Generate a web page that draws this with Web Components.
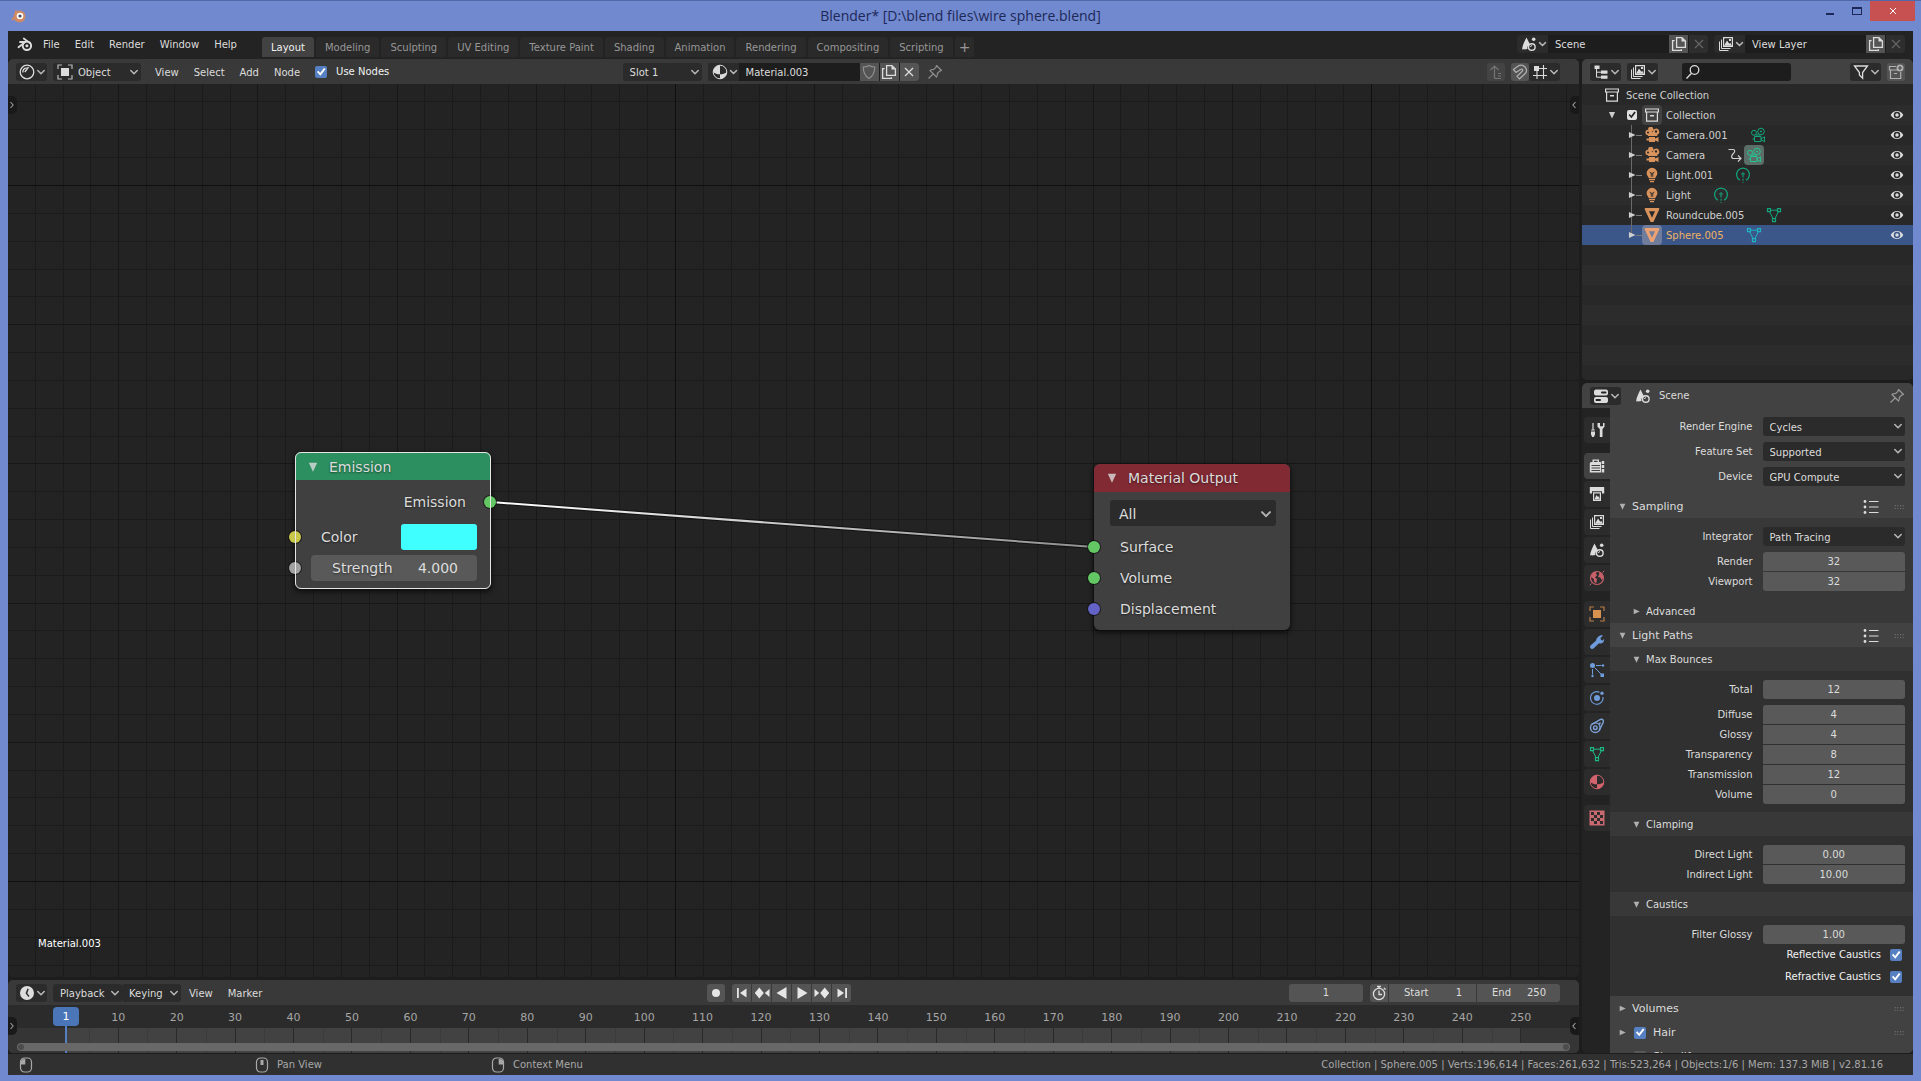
<!DOCTYPE html>
<html lang="en">
<head>
<meta charset="utf-8">
<title>Blender* [D:\blend files\wire sphere.blend]</title>
<style>
	html, body {
		height: 100%;
		margin: 0;
	}
	body {
		display: flex;
		flex-direction: column;
		overflow: hidden;
		background: #7189cf;
		color: #dcdcdc;
		font: 10px/18px "DejaVu Sans", sans-serif;
	}
</style>
</head>
<body>

<bl-titlebar>Blender* [D:\blend files\wire sphere.blend]</bl-titlebar>

<bl-app>
	<bl-topbar slot="top">
		<bl-menu>File</bl-menu>
		<bl-menu>Edit</bl-menu>
		<bl-menu>Render</bl-menu>
		<bl-menu>Window</bl-menu>
		<bl-menu>Help</bl-menu>

		<bl-tab slot="tabs" active>Layout</bl-tab>
		<bl-tab slot="tabs">Modeling</bl-tab>
		<bl-tab slot="tabs">Sculpting</bl-tab>
		<bl-tab slot="tabs">UV Editing</bl-tab>
		<bl-tab slot="tabs">Texture Paint</bl-tab>
		<bl-tab slot="tabs">Shading</bl-tab>
		<bl-tab slot="tabs">Animation</bl-tab>
		<bl-tab slot="tabs">Rendering</bl-tab>
		<bl-tab slot="tabs">Compositing</bl-tab>
		<bl-tab slot="tabs">Scripting</bl-tab>
		<bl-tab slot="tabs" add></bl-tab>

		<bl-datablock slot="blocks" icon="scene" value="Scene" label="Scene" locked></bl-datablock>
		<bl-datablock slot="blocks" icon="layers" value="View Layer" label="View layer" locked></bl-datablock>
	</bl-topbar>

	<bl-editor slot="nodes">
		<bl-header slot="header">
			<bl-picker icon="sphere" label="Editor type"></bl-picker>
			<bl-gap size="s"></bl-gap>
			<bl-select icon="object" value="Object" label="Shader type" style="--width: 88px"></bl-select>
			<bl-gap size="s"></bl-gap>
			<bl-menu>View</bl-menu>
			<bl-menu>Select</bl-menu>
			<bl-menu>Add</bl-menu>
			<bl-menu>Node</bl-menu>
			<bl-gap size="m"></bl-gap>
			<bl-check label="Use Nodes"></bl-check>
			<bl-gap style="flex: 3"></bl-gap>
			<bl-select value="Slot 1" label="Slot" style="--width: 79px"></bl-select>
			<bl-gap size="s"></bl-gap>
			<bl-datablock icon="material" value="Material.003" label="Material" shield></bl-datablock>
			<bl-gap size="m"></bl-gap>
			<bl-icon name="pin" style="color: #8e8e8e"></bl-icon>
			<bl-gap style="flex: 7"></bl-gap>
			<bl-tool icon="up" label="Parent node tree" dim></bl-tool>
			<bl-gap size="s"></bl-gap>
			<bl-tool icon="magnet" label="Snap"></bl-tool>
			<bl-picker icon="snap" label="Snap element"></bl-picker>
			<bl-gap size="l"></bl-gap>
		</bl-header>
		<bl-canvas></bl-canvas>
	</bl-editor>

	<bl-editor slot="timeline">
		<bl-header slot="header">
			<bl-picker icon="clock" label="Editor type"></bl-picker>
			<bl-gap size="s"></bl-gap>
			<bl-select value="Playback" label="Playback" style="--width: 69px"></bl-select>
			<bl-select value="Keying" label="Keying" style="--width: 59px"></bl-select>
			<bl-menu>View</bl-menu>
			<bl-menu>Marker</bl-menu>
			<bl-gap style="flex: 1"></bl-gap>
			<bl-transport></bl-transport>
			<bl-gap style="flex: 1"></bl-gap>
			<bl-range></bl-range>
			<bl-gap size="l"></bl-gap>
		</bl-header>
		<bl-timeline></bl-timeline>
	</bl-editor>

	<bl-editor slot="outliner" light>
		<bl-header slot="header">
			<bl-picker icon="tree" label="Editor type"></bl-picker>
			<bl-gap size="s"></bl-gap>
			<bl-picker icon="layers" label="Display mode"></bl-picker>
			<bl-gap style="flex: 2"></bl-gap>
			<bl-search></bl-search>
			<bl-gap style="flex: 5"></bl-gap>
			<bl-picker icon="filter" label="Filter"></bl-picker>
			<bl-gap size="s"></bl-gap>
			<bl-tool icon="newcollection" label="New collection"></bl-tool>
			<bl-gap size="m"></bl-gap>
		</bl-header>
		<bl-tree>
			<bl-item kind="root" icon="collection">Scene Collection</bl-item>
			<bl-item kind="group" icon="collection">Collection</bl-item>
			<bl-item icon="camera" data="cameradata">Camera.001</bl-item>
			<bl-item icon="camera" data="cameradata" linked>Camera</bl-item>
			<bl-item icon="light" data="lightdata">Light.001</bl-item>
			<bl-item icon="light" data="lightdata">Light</bl-item>
			<bl-item icon="mesh" data="meshdata">Roundcube.005</bl-item>
			<bl-item icon="mesh" data="meshdata" selected>Sphere.005</bl-item>
		</bl-tree>
	</bl-editor>

	<bl-editor slot="properties" light>
		<bl-header slot="header">
			<bl-picker icon="props" label="Editor type"></bl-picker>
			<bl-gap size="s"></bl-gap>
			<bl-gap size="m"></bl-gap>
			<bl-icon name="scene"></bl-icon>
			<bl-gap size="m"></bl-gap>
			<span>Scene</span>
			<bl-gap style="flex: 1"></bl-gap>
			<bl-icon name="pin" style="color: #9a9a9a"></bl-icon>
			<bl-gap size="m"></bl-gap>
		</bl-header>
		<bl-properties>
			<bl-proptab slot="tabs" icon="tool" label="Active tool" last></bl-proptab>
			<bl-proptab slot="tabs" icon="render" label="Render" active></bl-proptab>
			<bl-proptab slot="tabs" icon="output" label="Output"></bl-proptab>
			<bl-proptab slot="tabs" icon="layers" label="View layer"></bl-proptab>
			<bl-proptab slot="tabs" icon="scene" label="Scene"></bl-proptab>
			<bl-proptab slot="tabs" icon="world" label="World" style="color: #c8606a" last></bl-proptab>
			<bl-proptab slot="tabs" icon="object" label="Object" style="color: #d99150"></bl-proptab>
			<bl-proptab slot="tabs" icon="wrench" label="Modifiers" style="color: #6f9cdb"></bl-proptab>
			<bl-proptab slot="tabs" icon="particles" label="Particles" style="color: #6f9cdb"></bl-proptab>
			<bl-proptab slot="tabs" icon="physics" label="Physics" style="color: #6f9cdb"></bl-proptab>
			<bl-proptab slot="tabs" icon="constraint" label="Constraints" style="color: #7ea0d8"></bl-proptab>
			<bl-proptab slot="tabs" icon="meshdata" label="Object data" style="color: #1fb884"></bl-proptab>
			<bl-proptab slot="tabs" icon="material" label="Material" style="color: #d3636c" last></bl-proptab>
			<bl-proptab slot="tabs" icon="texture" label="Texture" style="color: #c8696f"></bl-proptab>

			<bl-fields>
				<bl-field kind="select" label="Render Engine" value="Cycles"></bl-field>
				<bl-field kind="select" label="Feature Set" value="Supported"></bl-field>
				<bl-field kind="select" label="Device" value="GPU Compute"></bl-field>
			</bl-fields>
			<bl-panel label="Sampling" open presets grip>
				<bl-fields>
					<bl-field kind="select" label="Integrator" value="Path Tracing"></bl-field>
					<bl-stack>
						<bl-field label="Render" value="32" edge="top"></bl-field>
						<bl-field label="Viewport" value="32" edge="bottom"></bl-field>
					</bl-stack>
				</bl-fields>
				<bl-panel label="Advanced" level="2"></bl-panel>
			</bl-panel>
			<bl-panel label="Light Paths" open presets grip>
				<bl-panel label="Max Bounces" level="2" open>
					<bl-fields>
						<bl-field label="Total" value="12"></bl-field>
						<bl-stack>
							<bl-field label="Diffuse" value="4" edge="top"></bl-field>
							<bl-field label="Glossy" value="4" edge="none"></bl-field>
							<bl-field label="Transparency" value="8" edge="none"></bl-field>
							<bl-field label="Transmission" value="12" edge="none"></bl-field>
							<bl-field label="Volume" value="0" edge="bottom"></bl-field>
						</bl-stack>
					</bl-fields>
				</bl-panel>
				<bl-panel label="Clamping" level="2" open>
					<bl-fields>
						<bl-stack>
							<bl-field label="Direct Light" value="0.00" edge="top"></bl-field>
							<bl-field label="Indirect Light" value="10.00" edge="bottom"></bl-field>
						</bl-stack>
					</bl-fields>
				</bl-panel>
				<bl-panel label="Caustics" level="2" open>
					<bl-fields tight>
						<bl-field label="Filter Glossy" value="1.00"></bl-field>
						<bl-check label="Reflective Caustics" trailing></bl-check>
						<bl-check label="Refractive Caustics" trailing></bl-check>
					</bl-fields>
				</bl-panel>
			</bl-panel>
			<bl-panel label="Volumes" grip></bl-panel>
			<bl-panel label="Hair" grip check="on"></bl-panel>
			<bl-panel label="Simplify" grip check="off"></bl-panel>
		</bl-properties>
	</bl-editor>

	<bl-status slot="status"></bl-status>
</bl-app>

<script>
'use strict';

/*
 * Icons, all on a 16 by 16 grid
 */

const stroke = 'fill="none" stroke="currentColor"';

const icons = {
	logo: `<path ${stroke} stroke-width="1.8" stroke-linecap="round" d="M1.5 11.3 8.3 6H3M6.8 2.5l6.4 4.9"/><circle ${stroke} stroke-width="2" cx="9.9" cy="9.8" r="4.2"/><circle fill="currentColor" cx="9.9" cy="9.8" r="1.5"/>`,
	chevron: `<path ${stroke} stroke-width="1.6" stroke-linecap="round" d="M4.8 6.5 8 9.7l3.2-3.2"/>`,
	left: `<path ${stroke} stroke-width="1.4" d="M10 4 6.5 8l3.5 4"/>`,
	right: `<path ${stroke} stroke-width="1.4" d="M6 4l3.5 4L6 12"/>`,
	down: '<path fill="currentColor" d="M4.5 4.5h7L8 12z"/>',
	side: '<path fill="currentColor" d="M4.5 4.5v7L12 8z"/>',
	sphere: `<circle ${stroke} stroke-width="1.3" cx="8" cy="8" r="6.8"/><path ${stroke} stroke-width="1.3" d="M3.8 8.5c0-2.700 1.500-4.500 3.900-4.700"/><path ${stroke} stroke-width="1.300" d="M5.800 8 9.500 3"/>`,
	object: `<path ${stroke} stroke-width="1.2" opacity=".8" d="M1 5V1h4M11 1h4v4M15 11v4h-4M5 15H1v-4"/><path fill="currentColor" d="M4 4h8v8H4z"/>`,
	material: `<circle ${stroke} cx="8" cy="8" r="6.8"/><path fill="currentColor" d="M8 1.2A6.8 6.8 0 0 0 1.2 8c1.500 1.500 4 2.300 6.800 2.300zM8 10.300c2.800 0 5.200-.8 6.800-2.300A6.800 6.800 0 0 1 8 14.800z"/>`,
	shield: `<path ${stroke} stroke-width="1.2" d="M8 1.500c1.500 1 3.600 1.500 5.700 1.500 0 5.500-1.500 9-5.700 11.500C3.800 12 2.300 8.500 2.300 3 4.400 3 6.500 2.500 8 1.500z"/>`,
	copy: `<path ${stroke} stroke-width="1.3" d="M5.600 1.600h5.300l3.500 3.500v6.300H5.600z"/><path ${stroke} stroke-width="1.3" d="M3.600 4.600h-2v9.800h8.800v-1.200"/><path fill="currentColor" d="M10.500 1v4.500H15z"/>`,
	close: `<path ${stroke} stroke-width="1.3" d="M4 4l8 8M12 4l-8 8"/>`,
	pin: `<path ${stroke} stroke-width="1.2" stroke-linejoin="round" d="M9.500 1.500l5 5-1.800.6-2.400 2.400c.4 1.400.1 2.600-.8 3.500L3 6.500c1-.9 2.200-1.200 3.500-.8L8.900 3.300zM6.200 9.800 1.500 14.500"/>`,
	up: `<path ${stroke} stroke-width="1.2" d="M6.500 14.500V2M2.500 6l4-4 4 4M10 9.500h3M10 12h3M6.500 14.500H13"/>`,
	magnet: `<path ${stroke} stroke-width="1.2" d="M1.500 5.500 5.500 2.500C8 .8 11 .8 13 3s1.800 5-.3 7L7.500 14.800 5 12.300l5-4.800c1.500-1.500.2-3.200-1.500-2.100L4 8.500z"/>`,
	snap: `<path ${stroke} stroke-width="1.1" d="M5 7v8M11.500 1v14M7 4.500h8M1 11.500h14"/><path fill="currentColor" d="M2 2h5v5H2z"/>`,
	scene: `<path fill="currentColor" d="M5.500 1.500 9 8.500C6.800 9 6 11 6.500 13 4 13.500 1.500 13.500 1.200 13c0-3 2.300-7.500 4.300-11.500z"/><circle ${stroke} stroke-width="1.4" cx="10.8" cy="11" r="3.3"/><circle fill="currentColor" cx="12.7" cy="3.3" r="1.8"/><path ${stroke} d="M9.500 11a1.500 1.500 0 0 1 1.500-1.400"/>`,
	layers: `<path ${stroke} d="M1.500 5.500v9h9M3.500 3.500v9h9"/><path ${stroke} stroke-width="1.2" d="M5.600 1.600h8.800v8.800H5.600z"/><path fill="currentColor" d="M6 9.800 9 4.500l2.300 3.300.9-1 1.800 3zM11 3h2v2h-2z"/>`,
	tree: `<path fill="currentColor" d="M1.500 1.500h5v3.500h-5zM8 6.500h6.500v3.200H8zM8 11.500h6.500v3.200H8z"/><path ${stroke} d="M3.500 5v8.200H8M3.500 8.200H8"/>`,
	search: `<circle ${stroke} stroke-width="1.3" cx="9.500" cy="6" r="4.3"/><path ${stroke} stroke-width="1.3" d="M6.500 9.200 1.500 14.500"/>`,
	filter: `<path ${stroke} stroke-width="1.3" d="M1.500 2h13L9.600 8.500v5.700L6.400 11V8.500z"/>`,
	newcollection: `<path ${stroke} stroke-width="1.2" d="M8 2.500H1.500V6H14M2.500 6v8.500h10.200V8M6 9.500h3"/><circle fill="currentColor" cx="12" cy="4" r="3.500"/><path stroke="#4a4a4a" stroke-width="1.2" d="M10 4h4M12 2v4"/>`,
	collection: `<path ${stroke} stroke-width="1.2" d="M1.600 2h12.800v3H1.600zM2.600 5v9.200h10.800V5"/><path fill="currentColor" d="M6 8h4v1.600H6z"/>`,
	camera: '<path fill="currentColor" fill-rule="evenodd" d="M4.200 2.800a2.600 2.600 0 1 1 3.600 1.900l-.2.300h1.300a3.200 3.200 0 1 1 4.400 2.800V9H4V8.200a2.700 2.700 0 1 1 .2-5.400zM4 4.500a1 1 0 1 0 0 2 1 1 0 0 0 0-2zm8-1.300a1.200 1.200 0 1 0 0 2.400 1.200 1.200 0 0 0 0-2.400z"/><path fill="currentColor" d="M5 10h6v1.500l3.500-1.500v5L11 13.500V15H5v-1.500H2.500v-2H5z"/>',
	cameradata: `<circle ${stroke} cx="4" cy="5.800" r="2.500"/><circle ${stroke} cx="11" cy="4.500" r="3.300"/><circle fill="currentColor" cx="11" cy="4.500" r="1"/><path ${stroke} d="M4.500 9.500H11v5H4.500zM11 11.800l3.500-2v5L11 12.500M4.500 12H2.500M5.500 8h5"/>`,
	arrow: `<path ${stroke} stroke-width="1.2" d="M1.500 2.500h4.800c1.700 0 1.700 2.500.5 3.500C4.500 7.800 3.500 11.500 6.500 11.500H14M11 8.500l3 3-3 3"/>`,
	light: '<path fill="currentColor" fill-rule="evenodd" d="M8 .8a5.400 5.400 0 0 1 5.400 5.400c0 2.300-1.900 3.200-2.100 5H4.700c-.2-1.800-2.100-2.700-2.100-5A5.400 5.400 0 0 1 8 .8zM5 4.500l1.800 2.300v3h.9V6.500h.6v3.300h.9v-3L11 4.500 8 6z"/><path fill="currentColor" d="M5 12h6v1.200H5zM6 14h4v1.200H6z"/>',
	lightdata: `<path ${stroke} stroke-width="1.2" d="M5 13.200a6.400 6.400 0 1 1 6 0"/><circle ${stroke} cx="8" cy="7" r="1.2"/><path ${stroke} stroke-dasharray="2 1.300" d="M8 8.500V16"/>`,
	mesh: '<path fill="currentColor" fill-rule="evenodd" d="M.8 1h14.400v1.500L9.400 15H6.600L.8 2.500zM5 4.200l3 6.500 3-6.500z"/>',
	meshdata: `<path ${stroke} d="M4 3.200h8M3.500 4.500 7.300 12M12.500 4.500 8.700 12"/><path ${stroke} stroke-width="1.2" d="M1.500 1.700h3v3h-3zM11.500 1.700h3v3h-3zM6.500 11.700h3v3h-3z"/>`,
	eye: '<path fill="currentColor" fill-rule="evenodd" d="M.8 8C3.800 2 12.200 2 15.200 8 12.200 14 3.800 14 .8 8zM8 4.300a3.700 3.700 0 1 0 0 7.400 3.700 3.700 0 0 0 0-7.400z"/><circle fill="currentColor" cx="8" cy="8" r="2"/>',
	props: `<rect fill="currentColor" x="1" y="1.500" width="14" height="6" rx="2"/><rect fill="currentColor" x="1" y="9" width="14" height="6" rx="2"/><path stroke="#232323" stroke-width="2" stroke-linecap="round" d="M9 4.500h3.500M3.500 12H7"/>`,
	tool: `<path fill="currentColor" d="M3.400 1h1.200v6.500h1.200v1H2.200v-1h1.200zM2 9.500h4v3L4.800 15H3.200L2 12.500z"/><path fill="currentColor" d="M8.500 1v3.800L10.800 7v8h2.700V7l2-2.200V1H14v3.200h-3V1z"/>`,
	render: '<path fill="currentColor" fill-rule="evenodd" d="M3.500 4V1.500h6.500V4H12v10.500H.8V5L2 4zm1.400-1.200V4h3.700V2.800zM2.500 7v1H11V7zm0 2.500v1H11v-1zm0 2.500v1H11v-1z"/><path fill="currentColor" d="M12.700 3h2.500v3h-2.500zM12.700 7h2.500v3h-2.500zM12.700 11h2.500v3.500h-2.500z"/>',
	output: '<path fill="currentColor" d="M.8 1h14.400v6.500H13V5.200H3v2.300H.8z"/><path fill="currentColor" fill-rule="evenodd" d="M4 6.200h8V15H4zm1.200 1.200v6.200h5.600V7.400z"/><path fill="currentColor" d="M5.500 13.300 7.500 9l1.500 2 .8-.8 1 3.100z"/>',
	world: `<circle ${stroke} stroke-width="1.2" cx="8" cy="8" r="6.5"/><path fill="currentColor" d="M2 7c.3-2.500 2.500-5 5.500-5.200L7 4l1.200 1L6 7.500 8 9l-.8 4.500L5 11.500 4.800 9zM10.500 2.200c2.500 1 3.800 3 4 5.300L12.500 10l-1.200-2.500L9 7l1-2.200z"/><path ${stroke} d="M.8 15.200 2.500 13.500M15.200.8 13.500 2.500"/>`,
	wrench: '<path fill="currentColor" d="M9.500 2.500c1.500-1.500 3.500-1.500 4.500-1L11.500 4 12 6l2 .5L15 4.500c.5 2-.5 5-3.500 5-.8 0-1.200-.2-1.500-.3L4.500 14.500c-1.800 1.500-4.500-.8-3-3L7.200 6.500C7 5.500 8 3.700 9.500 2.500z"/>',
	particles: `<circle fill="currentColor" cx="3.500" cy="3.500" r="2.500"/><circle fill="currentColor" cx="14" cy="3.500" r="1.2"/><circle fill="currentColor" cx="3.500" cy="14" r="1.2"/><path fill="currentColor" d="M11.500 11.500h3.500v3.500h-3.500z"/><path ${stroke} d="M7 3.500h5.500M3.500 7v5.500M5.500 5.500l6.500 6.500"/>`,
	physics: `<path ${stroke} stroke-width="1.2" d="M10.500 2.300A6.300 6.300 0 1 0 14 7"/><circle fill="currentColor" cx="8" cy="8" r="3"/><circle fill="currentColor" cx="13" cy="3.200" r="1.7"/>`,
	constraint: `<circle ${stroke} stroke-width="1.4" cx="6.300" cy="9.700" r="4.800"/><circle ${stroke} stroke-width="1.4" cx="6.300" cy="9.700" r="1.800"/><path ${stroke} stroke-width="1.4" d="M2.500 6.700 11.500 1.500c2.500-.8 3.500 1.500 2.600 3.200L10 12.800M11.500 4.500l-1.500 2"/>`,
	texture: '<path fill="currentColor" fill-rule="evenodd" d="M.5.5h15v15H.5zM2 2v3h3V2zm6 0v3h3V2zM5 5v3h3V5zm6 0v3h3V5zM2 8v3h3V8zm6 0v3h3V8zM5 11v3h3v-3zm6 0v3h3v-3z"/>',
	list: `<path ${stroke} stroke-width="1.2" d="M6 2.500h9.500M6 8h9.500M6 13.500h9.500"/><circle fill="currentColor" cx="2" cy="2.500" r="1.4"/><circle fill="currentColor" cx="2" cy="8" r="1.4"/><circle fill="currentColor" cx="2" cy="13.500" r="1.4"/>`,
	grip: '<path fill="currentColor" d="M2 6h1v1H2zM5 6h1v1H5zM8 6h1v1H8zM11 6h1v1h-1zM2 9h1v1H2zM5 9h1v1H5zM8 9h1v1H8zM11 9h1v1h-1z"/>',
	clock: '<path fill="currentColor" fill-rule="evenodd" d="M8 1a7 7 0 1 1 0 14A7 7 0 0 1 8 1zm.5 2.500L6.500 8.300l3 3.700 1-1-2.200-2.700L9.800 4z"/>',
	record: '<circle fill="currentColor" cx="8" cy="8" r="4"/>',
	first: '<path fill="currentColor" d="M3 3h1.800v10H3zM12.500 3.500v9L6 8z"/>',
	prevkey: '<path fill="currentColor" d="M5.300 2.500 9.800 8l-4.500 5.500L.8 8zM15.500 4v8L10.800 8z"/>',
	back: '<path fill="currentColor" d="M12.500 2v12L2.500 8z"/>',
	play: '<path fill="currentColor" d="M3.500 2v12l10-6z"/>',
	nextkey: '<path fill="currentColor" d="M10.700 2.500 6.200 8l4.500 5.500L15.200 8zM.5 4v8l4.700-4z"/>',
	last: '<path fill="currentColor" d="M11.200 3H13v10h-1.800zM3.500 3.500v9L10 8z"/>',
	stopwatch: `<circle ${stroke} stroke-width="1.3" cx="8" cy="9" r="5.600"/><path ${stroke} stroke-width="1.3" d="M8 5.500V9.500h3M6 1.500h4M8 1.500v2M13 3l1.500 1.500"/>`,
	mouseleft: `<rect ${stroke} stroke-width="1.2" x="2.500" y="1" width="11" height="14" rx="4"/><path fill="currentColor" d="M7.300 2v5.500H3V5c0-2 1-3 3-3z"/>`,
	mousemid: `<rect ${stroke} stroke-width="1.2" x="2.500" y="1" width="11" height="14" rx="4"/><path fill="currentColor" d="M6.500 3h3v5h-3z"/>`,
	mouseright: `<rect ${stroke} stroke-width="1.2" x="2.500" y="1" width="11" height="14" rx="4"/><path fill="currentColor" d="M8.700 2v5.500H13V5c0-2-1-3-3-3z"/>`,
};

const icon = (name, extra = '') => `<svg class="icon ${extra}" viewBox="0 0 16 16" aria-hidden="true">${icons[name]}</svg>`;
const pickerChevron = `<svg class="chevron" viewBox="2 0 12 16" height="16" aria-hidden="true">${icons.chevron}</svg>`;

/*
 * Shared base
 */

const baseStyle = `
	*, *::before, *::after {
		box-sizing: border-box;
	}
	:host {
		display: block;
		box-sizing: border-box;
	}
	.icon {
		display: block;
		flex: none;
		width: 16px;
		height: 16px;
	}
	.chevron {
		color: #b4b4b4;
	}
	button, input, select {
		margin: 0;
		padding: 0;
		border: 0;
		background: none;
		color: inherit;
		font: inherit;
		outline: none;
		appearance: none;
	}
	label {
		white-space: nowrap;
	}
`;

const checkStyle = `
	input[type=checkbox] {
		display: block;
		flex: none;
		width: 12px;
		height: 12px;
		border-radius: 2px;
		background: #595959;
	}
	input[type=checkbox]:checked {
		background: #5680c2;
	}
	input[type=checkbox]:checked::before {
		content: '';
		display: block;
		width: 12px;
		height: 12px;
		background: #fff;
		clip-path: polygon(16% 50%, 28% 40%, 42% 58%, 74% 16%, 88% 26%, 44% 82%);
	}
`;

const selectStyle = `
	.select {
		display: grid;
		position: relative;
		height: 18px;
		border-radius: 3px;
		background: #2b2b2b;
	}
	.select select {
		min-width: 0;
		padding: 1px 16px 0 7px;
	}
	.select option {
		background: #2b2b2b;
	}
	.select .icon {
		position: absolute;
		top: 1px;
		pointer-events: none;
	}
	.select .chevron {
		right: -1px;
	}
`;

// Small tabs on the border of a region that open its side panels
const edgeStyle = `
	.edge {
		position: absolute;
		top: 12px;
		width: 9px;
		height: 18px;
		background: #191919;
		color: #a0a0a0;
	}
	.edge .icon {
		width: 12px;
		height: 18px;
		margin-left: -2px;
	}
	.edge.start {
		left: 0;
		border-radius: 0 5px 5px 0;
	}
	.edge.end {
		right: 0;
		border-radius: 5px 0 0 5px;
	}
`;

class Part extends HTMLElement {
	constructor() {
		super();
		this.attachShadow({ mode: 'open' });
		this.shadowRoot.innerHTML = `<style>${baseStyle}</style>${this.render()}`;
	}

	attr(name) {
		return this.getAttribute(name) || '';
	}
}

// Icon

class IconElement extends Part {
	render() {
		return icon(this.attr('name'));
	}
}

// Titlebar

class TitlebarElement extends Part {
	render() {
		return `
			<style>
				:host {
					display: grid;
					grid-template-columns: 1fr auto 1fr;
					flex: none;
					height: 31px;
					border-top: 1px solid #5268a8;
					color: #1d2858;
					font: 14px/30px "Open Sans", sans-serif;
				}
				.logo {
					margin: 7px 0 0 11px;
					color: #cf8a63;
				}
				.controls {
					display: flex;
					justify-content: flex-end;
					padding-right: 6px;
				}
				button {
					display: grid;
					place-items: center;
					width: 26px;
					height: 20px;
				}
				.minimize {
					margin-right: 1px;
				}
				.minimize::before {
					content: '';
					width: 8px;
					height: 2px;
					margin-top: 6px;
					background: currentColor;
				}
				.maximize::before {
					content: '';
					width: 10px;
					height: 8px;
					border: 1px solid;
					border-top-width: 2px;
				}
				.close {
					width: 45px;
					background: #c75050;
					color: #fff;
				}
				.close .icon {
					width: 12px;
					height: 12px;
				}
			</style>
			<svg class="icon logo" viewBox="0 0 16 16" aria-hidden="true">
				<circle cx="8.500" cy="8.500" r="6" fill="currentColor"/>
				<path d="M1 12 7 6M4 3l6 3" stroke="currentColor" stroke-width="2"/>
				<circle cx="9" cy="8" r="3.300" fill="#fff"/>
				<circle cx="9" cy="8" r="1.600" fill="#4a4668"/>
			</svg>
			<div><slot></slot></div>
			<div class="controls">
				<button type="button" class="minimize" title="Minimize"></button>
				<button type="button" class="maximize" title="Maximize"></button>
				<button type="button" class="close" title="Close">${icon('close')}</button>
			</div>
		`;
	}
}

// App frame

class AppElement extends Part {
	render() {
		return `
			<style>
				:host {
					flex: 1;
					display: grid;
					grid-template-columns: minmax(0, 1fr) 331px;
					grid-template-rows: 28px minmax(0, 1fr) 21px;
					column-gap: 3px;
					min-height: 0;
					margin: 0 8px 6px;
					background: #1d1d1d;
				}
				.left, .right {
					display: flex;
					flex-direction: column;
					min-width: 0;
					min-height: 0;
					padding-bottom: 1px;
					gap: 3px;
				}
				::slotted(bl-topbar), ::slotted(bl-status) {
					grid-column: 1 / 3;
				}
				::slotted([slot=nodes]), ::slotted([slot=properties]) {
					flex: 1;
					min-height: 0;
				}
				::slotted([slot=outliner]) {
					flex: none;
					height: 321px;
				}
			</style>
			<slot name="top"></slot>
			<div class="left">
				<slot name="nodes"></slot>
				<slot name="timeline"></slot>
			</div>
			<div class="right">
				<slot name="outliner"></slot>
				<slot name="properties"></slot>
			</div>
			<slot name="status"></slot>
		`;
	}
}

class EditorElement extends Part {
	render() {
		return `
			<style>
				:host {
					--header: #393939;
					display: flex;
					flex-direction: column;
					overflow: hidden;
					border-radius: 5px;
					background: #232323;
				}
				:host([light]) {
					--header: #424242;
				}
			</style>
			<slot name="header"></slot>
			<slot></slot>
		`;
	}
}

class HeaderElement extends Part {
	render() {
		return `
			<style>
				:host {
					display: flex;
					align-items: center;
					flex: none;
					height: 25px;
					padding: 1px 0 0 8px;
					background: var(--header);
				}
			</style>
			<slot></slot>
		`;
	}
}

class GapElement extends Part {
	render() {
		return `
			<style>
				:host([size=s]) {
					flex: 0 0 6px;
				}
				:host([size=m]) {
					flex: 0 0 8px;
				}
				:host([size=l]) {
					flex: 0 0 19px;
				}
			</style>
		`;
	}
}

// Topbar

class TopbarElement extends Part {
	render() {
		return `
			<style>
				:host {
					display: flex;
					align-items: center;
					padding: 0 8px 2px 9px;
					background: #232323;
				}
				.logo {
					margin-right: 2px;
					color: #dcdcdc;
				}
				nav {
					display: flex;
				}
				.tabs {
					display: flex;
					flex: 1;
					gap: 2px;
					align-self: flex-end;
					margin-left: 18px;
				}
				.blocks {
					display: flex;
					gap: 6px;
				}
			</style>
			<span class="logo">${icon('logo')}</span>
			<nav><slot></slot></nav>
			<div class="tabs"><slot name="tabs"></slot></div>
			<div class="blocks"><slot name="blocks"></slot></div>
		`;
	}
}

class MenuElement extends Part {
	render() {
		return `
			<style>
				button {
					display: block;
					height: 18px;
					padding: 1px 7px 0 8px;
				}
			</style>
			<button type="button"><slot></slot></button>
		`;
	}
}

class TabElement extends Part {
	render() {
		return `
			<style>
				button {
					display: block;
					height: 20px;
					padding: 1px 9px 0;
					border-radius: 3px 3px 0 0;
					background: #2a2a2a;
					color: #979797;
				}
				:host([active]) button {
					background: #424242;
					color: #f0f0f0;
				}
				:host([add]) button {
					padding: 0 4px;
					font-size: 14px;
				}
			</style>
			<button type="button">${this.hasAttribute('add') ? '+' : '<slot></slot>'}</button>
		`;
	}
}

// Header widgets

class PickerElement extends Part {
	render() {
		return `
			<style>
				button {
					display: flex;
					align-items: center;
					width: 31px;
					height: 18px;
					padding-left: 3px;
					border-radius: 3px;
					background: #2b2b2b;
				}
				.chevron {
					width: 12px;
				}
			</style>
			<button type="button" aria-label="${this.attr('label')}">${icon(this.attr('icon'))}${pickerChevron}</button>
		`;
	}
}

class ToolElement extends Part {
	render() {
		return `
			<style>
				button {
					display: grid;
					place-items: center;
					width: 18px;
					height: 18px;
					border-radius: 3px;
					background: #545454;
					color: #b0b0b0;
				}
				:host([dim]) button {
					background: #444;
					color: #747474;
				}
			</style>
			<button type="button" aria-label="${this.attr('label')}">${icon(this.attr('icon'))}</button>
		`;
	}
}

class SelectElement extends Part {
	render() {
		const lead = this.attr('icon');
		return `
			<style>
				${selectStyle}
				.select {
					width: var(--width);
				}
				.lead {
					left: 4px;
				}
				.lead + select {
					padding-left: 25px;
				}
			</style>
			<div class="select">
				${lead ? icon(lead, 'lead') : ''}
				<select aria-label="${this.attr('label')}"><option>${this.attr('value')}</option></select>
				${icon('chevron', 'chevron')}
			</div>
		`;
	}
}

class CheckElement extends Part {
	render() {
		return `
			<style>
				${checkStyle}
				label {
					display: flex;
					align-items: center;
					gap: 9px;
					color: #f2f2f2;
				}
				:host([trailing]) label {
					flex-direction: row-reverse;
					height: 22px;
					padding-right: 3px;
				}
			</style>
			<label><input type="checkbox" checked>${this.attr('label')}</label>
		`;
	}
}

class DatablockElement extends Part {
	render() {
		return `
			<style>
				:host {
					display: flex;
					height: 18px;
					border-radius: 3px;
					overflow: hidden;
					background: #1d1d1d;
				}
				button {
					display: grid;
					place-items: center;
					width: 19px;
					margin-left: 1px;
					background: #545454;
				}
				.type {
					display: flex;
					align-items: center;
					width: 31px;
					margin: 0;
					padding-left: 4px;
					background: #2b2b2b;
				}
				.chevron {
					width: 12px;
				}
				input {
					width: 120px;
					padding: 1px 7px 0;
				}
				.shield {
					color: #8e8e8e;
				}
				:host([locked]) .close {
					background: #2e2e2e;
					color: #636363;
				}
			</style>
			<button type="button" class="type" aria-label="Browse">${icon(this.attr('icon'))}${pickerChevron}</button>
			<input type="text" value="${this.attr('value')}" aria-label="${this.attr('label')}">
			${this.hasAttribute('shield') ? `<button type="button" class="shield" aria-label="Fake user">${icon('shield')}</button>` : ''}
			<button type="button" aria-label="New">${icon('copy')}</button>
			<button type="button" class="close" aria-label="Unlink">${icon('close')}</button>
		`;
	}
}

class SearchElement extends Part {
	render() {
		return `
			<style>
				label {
					display: flex;
					align-items: center;
					width: 109px;
					height: 18px;
					padding-left: 3px;
					border-radius: 3px;
					background: #1d1d1d;
				}
				input {
					flex: 1;
					min-width: 0;
				}
			</style>
			<label>${icon('search')}<input type="search" aria-label="Search"></label>
		`;
	}
}

// Node canvas

class SocketElement extends Part {
	render() {
		return `
			<style>
				:host {
					position: absolute;
					top: 7px;
					left: -22px;
					width: 12px;
					height: 12px;
					border-radius: 50%;
					background: var(--color);
					box-shadow: 0 0 0 1px rgba(16, 16, 16, 0.7);
				}
				:host([output]) {
					left: auto;
					right: -19px;
				}
			</style>
		`;
	}
}

class NodeElement extends Part {
	render() {
		return `
			<style>
				:host {
					position: absolute;
					width: 196px;
					border-radius: 6px;
					background: rgba(66, 66, 66, 0.96);
					box-shadow: 0 2px 5px 1px rgba(0, 0, 0, 0.6);
					font-size: 14px;
					line-height: 26px;
					text-shadow: 0 1px 2px rgba(0, 0, 0, 0.5);
				}
				:host([selected])::after {
					content: '';
					position: absolute;
					inset: 0;
					border: 1px solid #e6e6e6;
					border-radius: 6px;
					pointer-events: none;
				}
				header {
					display: flex;
					align-items: center;
					gap: 10px;
					height: 28px;
					padding-left: 12px;
					border-radius: 6px 6px 0 0;
					background: var(--head);
				}
				:host([selected]) header {
					padding-top: 2px;
				}
				header .icon {
					width: 12px;
					height: 12px;
					opacity: 0.8;
				}
				.body {
					display: grid;
					gap: 5px;
					padding: 8px 14px 8px 16px;
				}
			</style>
			<header><svg class="icon" viewBox="3 3 10 10" aria-hidden="true">${icons.down}</svg>${this.attr('label')}</header>
			<div class="body"><slot></slot></div>
		`;
	}
}

class CanvasElement extends Part {
	render() {
		return `
			<style>
				${selectStyle}
				${edgeStyle}
				:host {
					position: relative;
					flex: 1;
					min-height: 0;
					overflow: hidden;
					background: #232323;
				}
				.grid {
					position: absolute;
					width: 100%;
					height: 100%;
				}
				.row {
					position: relative;
					display: flex;
					align-items: center;
					justify-content: space-between;
					height: 26px;
					padding-left: 10px;
				}
				.out {
					justify-content: flex-end;
					margin: 1px 0 4px;
					padding-right: 11px;
				}
				.swatch {
					width: 76px;
					height: 26px;
					border-radius: 3px;
					background: #40ffff;
				}
				.slider {
					padding: 0 19px 0 21px;
					border-radius: 4px;
					background: #595959;
				}
				.slider input {
					width: 50px;
					text-align: right;
				}
				.select {
					height: 26px;
					margin-bottom: 3px;
				}
				.select select {
					padding-left: 9px;
				}
				.select .icon {
					top: 4px;
					right: 0;
					width: 20px;
					height: 20px;
				}
				.name {
					position: absolute;
					left: 30px;
					bottom: 24px;
					color: #fff;
				}
			</style>
			<svg class="grid" aria-hidden="true">
				<defs>
					<linearGradient id="wire" gradientUnits="userSpaceOnUse" x1="483" y1="0" x2="1086" y2="0">
						<stop offset="0" stop-color="#fff"/>
						<stop offset="1" stop-color="#8f8f8f"/>
					</linearGradient>
				</defs>
				<g id="lines"></g>
				<path d="M483 418 1086 463" stroke="#111" stroke-width="4"/>
				<path d="M483 418 1086 463" stroke="url(#wire)" stroke-width="2"/>
			</svg>
			<bl-node label="Emission" selected style="left: 287px; top: 368px; --head: #2c8f5f">
				<div class="row out">Emission<bl-socket output style="--color: #63c763"></bl-socket></div>
				<div class="row"><bl-socket style="--color: #c7c74a"></bl-socket>Color<button type="button" class="swatch" aria-label="Color"></button></div>
				<div class="row slider"><bl-socket style="--color: #a1a1a1"></bl-socket><label for="strength">Strength</label><input id="strength" type="text" value="4.000"></div>
			</bl-node>
			<bl-node label="Material Output" style="left: 1086px; top: 380px; --head: #822a34">
				<div class="select"><select aria-label="Target"><option>All</option></select>${icon('chevron', 'chevron')}</div>
				<div class="row"><bl-socket style="--color: #63c763"></bl-socket>Surface</div>
				<div class="row"><bl-socket style="--color: #63c763"></bl-socket>Volume</div>
				<div class="row"><bl-socket style="--color: #6363c7"></bl-socket>Displacement</div>
			</bl-node>
			<div class="name">Material.003</div>
			<button type="button" class="edge start" aria-label="Toolbar">${icon('right')}</button>
			<button type="button" class="edge end" aria-label="Sidebar">${icon('left')}</button>
		`;
	}

	connectedCallback() {
		// 25 cells per block of 696px, a stronger line on every fifth cell
		const block = 696;
		const shades = ['#1b1b1b', '#171717', '#0f0f0f'];
		const width = this.clientWidth;
		const height = this.clientHeight;
		const layers = ['', '', ''];
		for (let i = -30; i < 60; i++) {
			const offset = Math.round(block * i / 25);
			const order = i % 25 === 0 ? 2 : i % 5 === 0 ? 1 : 0;
			layers[order] += `
				<rect x="${667 + offset}" width="1" height="${height}" fill="${shades[order]}"/>
				<rect y="${101 + offset}" width="${width}" height="1" fill="${shades[order]}"/>
			`;
		}
		this.shadowRoot.querySelector('#lines').innerHTML = layers.join('');
	}
}

// Timeline

class TransportElement extends Part {
	render() {
		const keys = ['first', 'prevkey', 'back', 'play', 'nextkey', 'last'];
		return `
			<style>
				:host {
					display: flex;
					gap: 7px;
				}
				.group {
					display: flex;
					gap: 1px;
					border-radius: 3px;
					overflow: hidden;
				}
				button {
					display: grid;
					place-items: center;
					width: 19px;
					height: 18px;
					background: #545454;
					color: #e6e6e6;
				}
				.record {
					width: 18px;
					border-radius: 3px;
				}
			</style>
			<button type="button" class="record" aria-label="Auto keying">${icon('record')}</button>
			<div class="group">${keys.map((key) => `<button type="button" aria-label="${key}">${icon(key)}</button>`).join('')}</div>
		`;
	}
}

class RangeElement extends Part {
	render() {
		return `
			<style>
				:host {
					display: flex;
					gap: 7px;
				}
				.group {
					display: flex;
					gap: 1px;
					border-radius: 3px;
					overflow: hidden;
				}
				.frame {
					width: 74px;
					height: 18px;
					border-radius: 3px;
					background: #545454;
					text-align: center;
				}
				button, label {
					display: flex;
					align-items: center;
					justify-content: space-between;
					height: 18px;
					background: #545454;
				}
				button {
					justify-content: center;
					width: 18px;
				}
				label {
					width: 87px;
					padding: 0 14px 0 15px;
				}
				label + label {
					width: 83px;
				}
				label input {
					width: 28px;
					text-align: right;
				}
			</style>
			<input class="frame" type="text" value="1" aria-label="Current frame">
			<div class="group">
				<button type="button" aria-label="Use preview range">${icon('stopwatch')}</button>
				<label>Start<input type="text" value="1"></label>
				<label>End<input type="text" value="250"></label>
			</div>
		`;
	}
}

class TimelineElement extends Part {
	render() {
		let cells = '';
		for (let frame = 10; frame <= 250; frame += 10) {
			cells += `<div>${frame}</div>`;
		}
		return `
			<style>
				${edgeStyle}
				:host {
					position: relative;
					height: 48px;
					background: linear-gradient(#2b2b2b 23px, #424242 23px);
				}
				.cells {
					display: flex;
					height: 48px;
					padding: 0 29px 0 81px;
					background: linear-gradient(90deg, rgba(0, 0, 0, 0.2) 57px, transparent 57px, transparent calc(100% - 58px), rgba(0, 0, 0, 0.2) calc(100% - 58px)) 0 23px no-repeat;
				}
				.cells div {
					flex: 1 1 0;
					background:
						linear-gradient(#2a2a2a, #2a2a2a) 50% 23px / 1px 25px no-repeat,
						linear-gradient(#3b3b3b, #3b3b3b) 0 23px / 1px 25px no-repeat;
					color: #a6a6a6;
					font-size: 11px;
					line-height: 25px;
					text-align: center;
				}
				.now {
					position: absolute;
					top: 2px;
					left: 45px;
					width: 26px;
					height: 19px;
					border-radius: 4px;
					background: #4a76b8;
					color: #fff;
					font-size: 11px;
					line-height: 20px;
					text-align: center;
				}
				.now::after {
					content: '';
					position: absolute;
					top: 19px;
					left: 12px;
					width: 2px;
					height: 27px;
					background: #5680c2;
				}
				.scroll {
					position: absolute;
					right: 9px;
					bottom: 2px;
					left: 9px;
					display: flex;
					justify-content: space-between;
					height: 8px;
					padding: 1px;
					border-radius: 4px;
					background: #686868;
				}
				.scroll i {
					width: 6px;
					height: 6px;
					border-radius: 3px;
					background: #4c4c4c;
				}
			</style>
			<div class="cells">${cells}</div>
			<div class="now">1</div>
			<div class="scroll"><i></i><i></i></div>
			<button type="button" class="edge start" aria-label="Channels">${icon('right')}</button>
			<button type="button" class="edge end" aria-label="Sidebar">${icon('left')}</button>
		`;
	}
}

// Outliner

class TreeElement extends Part {
	render() {
		return `
			<style>
				:host {
					flex: 1;
					padding-top: 1px;
					background: repeating-linear-gradient(#282828 0 20px, #2c2c2c 20px 40px) 0 1px;
				}
			</style>
			<slot></slot>
		`;
	}
}

class ItemElement extends Part {
	render() {
		const kind = this.attr('kind');
		let lead = `<button type="button" class="toggle" aria-label="Expand">${icon('side')}</button><i class="line"></i>`;
		if (kind === 'group') {
			lead = `<button type="button" class="toggle" aria-label="Collapse">${icon('down')}</button><input type="checkbox" checked aria-label="Include collection">`;
		} else if (kind === 'root') {
			lead = '';
		}
		return `
			<style>
				${checkStyle}
				:host {
					display: flex;
					align-items: center;
					height: 20px;
					padding: 0 9px 0 46px;
					color: #cfcfcf;
					line-height: 20px;
				}
				:host([kind=root]) {
					padding-left: 20px;
				}
				:host([kind=group]) {
					padding-left: 26px;
				}
				:host([selected]) {
					background: #3b5689;
				}
				:host([selected]) .text {
					color: #f0b265;
				}
				.toggle {
					display: grid;
					place-items: center;
					width: 8px;
					height: 20px;
				}
				.toggle .icon {
					width: 14px;
					height: 14px;
					margin: 0 -3px;
				}
				:host(:not([kind])) .toggle {
					background: linear-gradient(#6a6a6a, #6a6a6a) 3px 0 / 1px 100% no-repeat;
				}
				:host([selected]) .toggle {
					background-size: 1px 50% !important;
				}
				.line {
					width: 6px;
					height: 1px;
					background: #7a7a7a;
				}
				input[type=checkbox] {
					width: 10px;
					height: 10px;
					margin: 0 5px 0 11px;
				}
				input[type=checkbox]:checked {
					background: #e0e0e0;
				}
				input[type=checkbox]:checked::before {
					width: 10px;
					height: 10px;
					background: #222;
				}
				.type {
					display: grid;
					place-items: center;
					width: 20px;
					height: 20px;
					margin-right: 4px;
					border-radius: 4px;
					color: #dcdcdc;
				}
				:host(:not([kind])) .type {
					color: #d9935c;
				}
				:host([kind=group]) .type {
					background: #424242;
				}
				:host([selected]) .type {
					background: #6f7c9c;
					color: #eda273;
				}
				.text {
					margin-right: 22px;
					padding-top: 2px;
				}
				.arrow {
					width: 17px;
				}
				.data {
					color: #12a57c;
				}
				:host([selected]) .data {
					color: #1fb4c4;
				}
				:host([linked]) .data {
					padding: 2px;
					border-radius: 4px;
					background: #5c6e68;
					color: #27c493;
				}
				.eye {
					margin-left: auto;
					color: #dcdcdc;
				}
				.eye .icon {
					width: 14px;
					height: 14px;
				}
			</style>
			${lead}
			<span class="type">${icon(this.attr('icon'))}</span>
			<span class="text"><slot></slot></span>
			${this.hasAttribute('linked') ? `<span class="arrow">${icon('arrow')}</span>` : ''}
			${this.attr('data') ? `<span class="data">${icon(this.attr('data'))}</span>` : ''}
			${kind === 'root' ? '' : `<button type="button" class="eye" aria-label="Hide in viewport">${icon('eye')}</button>`}
		`;
	}
}

// Properties

class PropertiesElement extends Part {
	render() {
		return `
			<style>
				:host {
					display: flex;
					flex: 1;
					min-height: 0;
					background: #232323;
				}
				.tabs {
					display: flex;
					flex: none;
					flex-direction: column;
					gap: 2px;
					width: 28px;
					padding: 9px 0 0 2px;
				}
				.panels {
					flex: 1;
					overflow: hidden;
					background: #424242;
				}
			</style>
			<div class="tabs"><slot name="tabs"></slot></div>
			<div class="panels"><slot></slot></div>
		`;
	}
}

class ProptabElement extends Part {
	render() {
		return `
			<style>
				:host {
					flex: none;
				}
				:host([last]) {
					margin-bottom: 8px;
				}
				button {
					display: grid;
					place-items: center;
					width: 26px;
					height: 26px;
					border-radius: 4px 0 0 4px;
					background: #2c2c2c;
				}
				:host([active]) button {
					background: #424242;
				}
			</style>
			<button type="button" aria-label="${this.attr('label')}">${icon(this.attr('icon'))}</button>
		`;
	}
}

class FieldsElement extends Part {
	render() {
		return `
			<style>
				:host {
					display: grid;
					gap: 6px;
					padding: 9px 8px 8px 0;
				}
				:host([tight]) {
					gap: 0;
				}
			</style>
			<slot></slot>
		`;
	}
}

class StackElement extends Part {
	render() {
		return `
			<style>
				:host {
					display: grid;
					gap: 1px;
				}
			</style>
			<slot></slot>
		`;
	}
}

class FieldElement extends Part {
	render() {
		const value = this.attr('value');
		const control = this.attr('kind') === 'select'
			? `<div class="select"><select id="control"><option>${value}</option></select>${icon('chevron', 'chevron')}</div>`
			: `<input id="control" type="text" value="${value}">`;
		return `
			<style>
				${selectStyle}
				:host {
					display: grid;
					grid-template-columns: 1fr 1fr;
					column-gap: 10px;
					line-height: 19px;
				}
				label {
					text-align: right;
				}
				.select {
					height: 19px;
				}
				input {
					min-width: 0;
					height: 19px;
					border-radius: 3px;
					background: #595959;
					text-align: center;
				}
				:host([edge=top]) input {
					border-radius: 3px 3px 0 0;
				}
				:host([edge=none]) input {
					border-radius: 0;
				}
				:host([edge=bottom]) input {
					border-radius: 0 0 3px 3px;
				}
			</style>
			<label for="control">${this.attr('label')}</label>
			${control}
		`;
	}
}

class PanelElement extends Part {
	render() {
		const check = this.attr('check');
		const title = check
			? `<label><input type="checkbox" ${check === 'on' ? 'checked' : ''}>${this.attr('label')}</label>`
			: `<span>${this.attr('label')}</span>`;
		return `
			<style>
				${checkStyle}
				:host {
					background: #383838;
				}
				:host([level="2"][open]) {
					background: #303030;
				}
				header {
					display: flex;
					align-items: center;
					height: 24px;
					padding: 1px 6px 0 6px;
					background: #424242;
					font-size: 11px;
				}
				:host([level="2"]) header {
					padding-left: 20px;
					background: #383838;
					font-size: 10px;
				}
				.toggle {
					margin-right: 3px;
					color: #b0b0b0;
				}
				.toggle .icon {
					width: 13px;
					height: 13px;
				}
				label {
					display: flex;
					align-items: center;
					gap: 7px;
					padding-left: 2px;
				}
				.presets {
					margin-right: 14px;
				}
				.spacer {
					flex: 1;
				}
				.grip .icon {
					width: 14px;
					color: #8c8c8c;
				}
			</style>
			<header>
				<button type="button" class="toggle" aria-label="Toggle panel">${icon(this.hasAttribute('open') ? 'down' : 'side')}</button>
				${title}
				<span class="spacer"></span>
				${this.hasAttribute('presets') ? `<button type="button" class="presets" aria-label="Presets">${icon('list')}</button>` : ''}
				${this.hasAttribute('grip') ? `<span class="grip">${icon('grip')}</span>` : ''}
			</header>
			<slot></slot>
		`;
	}
}

// Status bar

class StatusElement extends Part {
	render() {
		return `
			<style>
				:host {
					display: grid;
					grid-template-columns: 236px 236px 1fr auto;
					align-items: center;
					padding: 1px 30px 0 10px;
					background: #303030;
					color: #a8a8a8;
				}
				.hint {
					display: flex;
					gap: 7px;
					align-items: center;
				}
			</style>
			<div class="hint">${icon('mouseleft')}</div>
			<div class="hint">${icon('mousemid')}Pan View</div>
			<div class="hint">${icon('mouseright')}Context Menu</div>
			<div>Collection | Sphere.005 | Verts:196,614 | Faces:261,632 | Tris:523,264 | Objects:1/6 | Mem: 137.3 MiB | v2.81.16</div>
		`;
	}
}

// Definitions

window.customElements.define('bl-icon', IconElement);
window.customElements.define('bl-titlebar', TitlebarElement);
window.customElements.define('bl-app', AppElement);
window.customElements.define('bl-editor', EditorElement);
window.customElements.define('bl-header', HeaderElement);
window.customElements.define('bl-gap', GapElement);

window.customElements.define('bl-topbar', TopbarElement);
window.customElements.define('bl-menu', MenuElement);
window.customElements.define('bl-tab', TabElement);

window.customElements.define('bl-picker', PickerElement);
window.customElements.define('bl-tool', ToolElement);
window.customElements.define('bl-select', SelectElement);
window.customElements.define('bl-check', CheckElement);
window.customElements.define('bl-datablock', DatablockElement);
window.customElements.define('bl-search', SearchElement);

window.customElements.define('bl-socket', SocketElement);
window.customElements.define('bl-node', NodeElement);
window.customElements.define('bl-transport', TransportElement);
window.customElements.define('bl-range', RangeElement);
window.customElements.define('bl-timeline', TimelineElement);

window.customElements.define('bl-item', ItemElement);
window.customElements.define('bl-tree', TreeElement);

window.customElements.define('bl-proptab', ProptabElement);
window.customElements.define('bl-field', FieldElement);
window.customElements.define('bl-stack', StackElement);
window.customElements.define('bl-fields', FieldsElement);
window.customElements.define('bl-panel', PanelElement);
window.customElements.define('bl-properties', PropertiesElement);

window.customElements.define('bl-status', StatusElement);
// Last, since it measures its own box once the rest is laid out
window.customElements.define('bl-canvas', CanvasElement);
</script>
</body>
</html>
